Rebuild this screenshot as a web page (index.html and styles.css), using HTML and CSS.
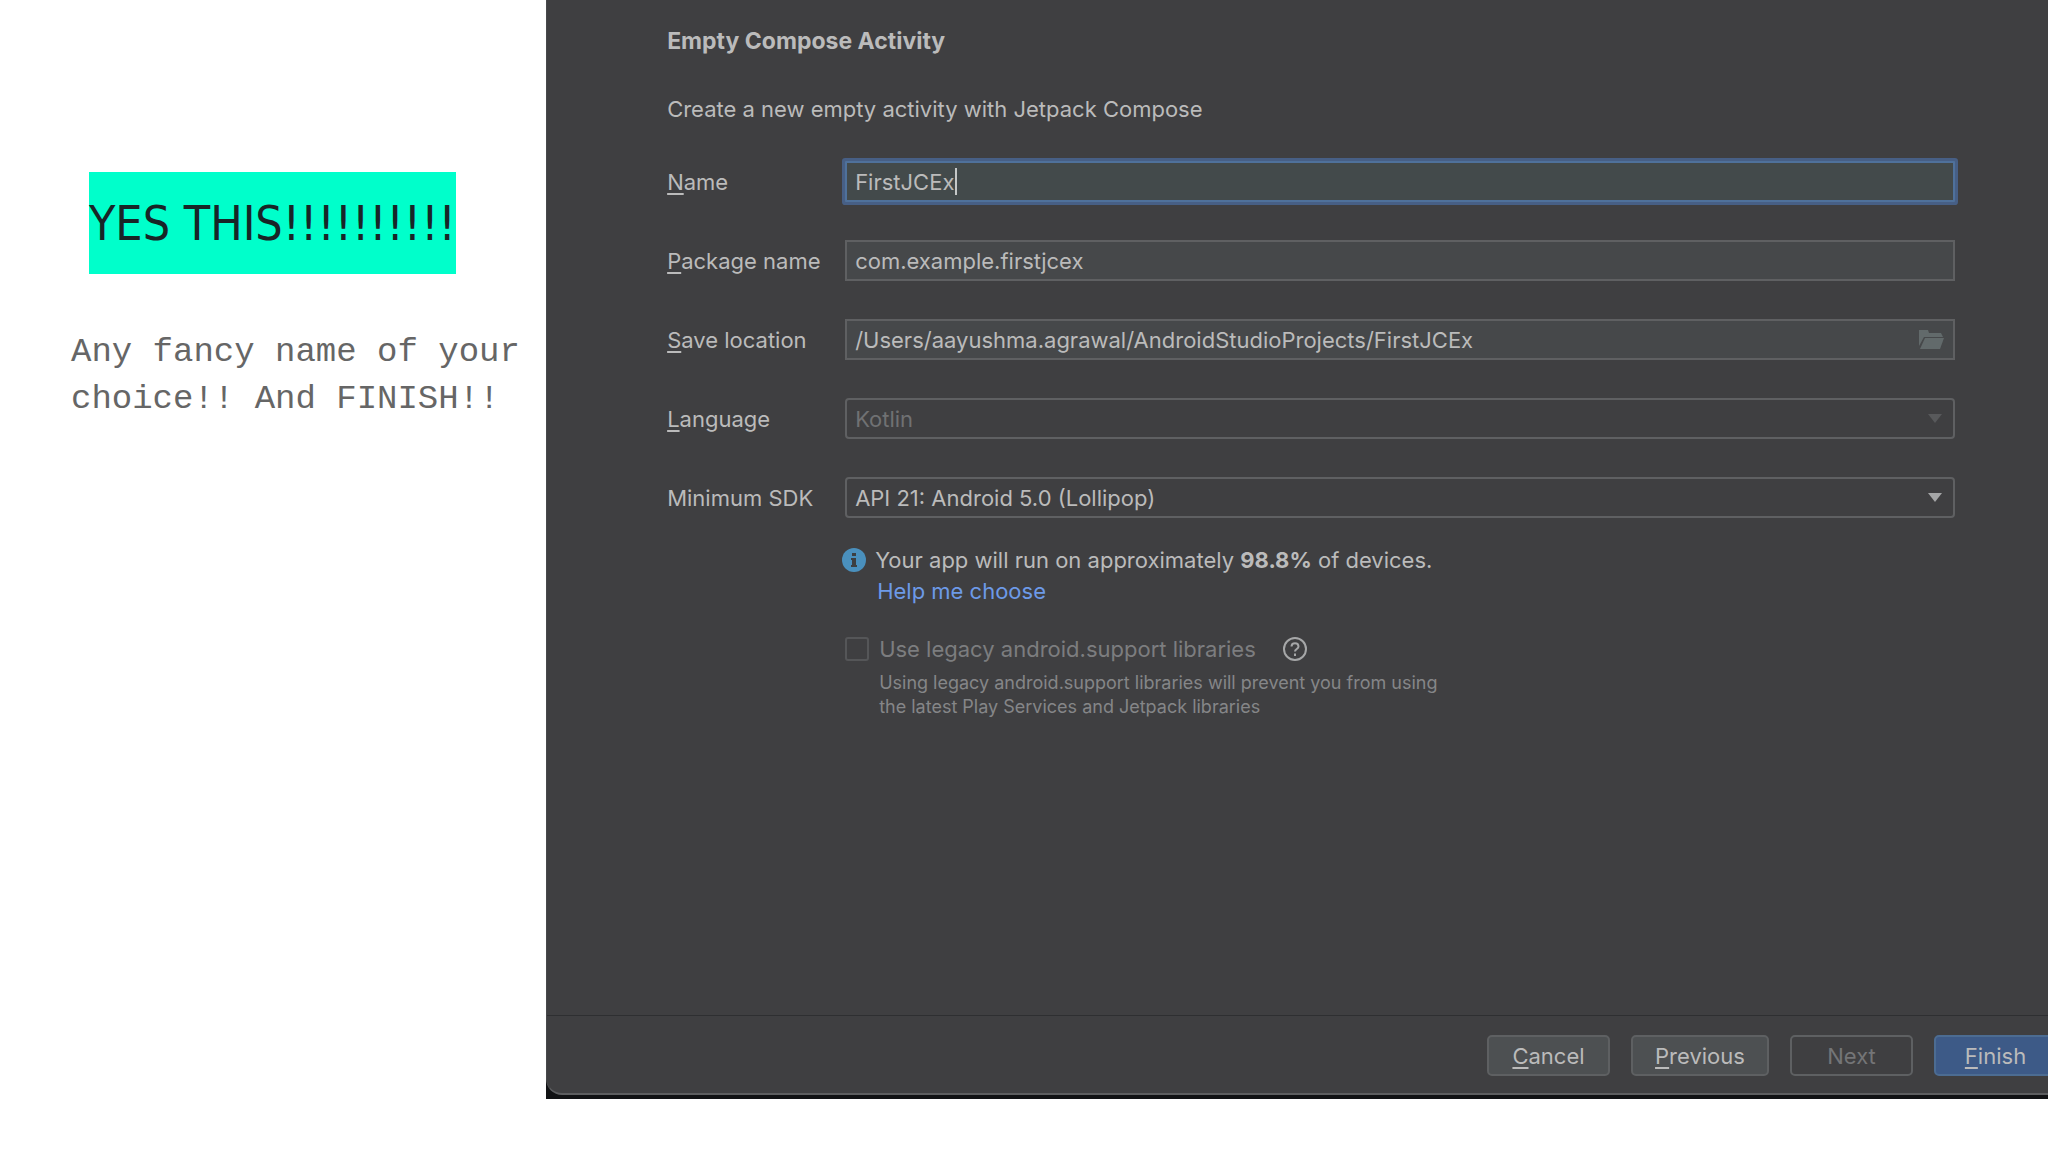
FILE: index.html
```html
<!DOCTYPE html>
<html lang="en">
<head>
<meta charset="utf-8">
<meta name="viewport" content="width=device-width, initial-scale=1">
<title>Empty Compose Activity</title>
<link rel="stylesheet" href="styles.css">
</head>
<body>
<div class="slide">
  <section class="notes">
    <h1 class="headline">YES THIS!!!!!!!!!!</h1>
    <p class="caption">Any fancy name of your choice!! And FINISH!!</p>
  </section>
  <main class="stage">
    <form class="wizard">
      <div class="content">
        <h2 class="title">Empty Compose Activity</h2>
        <p class="intro">Create a new empty activity with Jetpack Compose</p>
        <div class="fields">
          <label for="name"><u>N</u>ame</label>
          <div class="control">
            <input class="field focused" id="name" type="text" value="FirstJCEx">
            <span class="caret"></span>
          </div>
          <label for="package"><u>P</u>ackage name</label>
          <div class="control"><input class="field" id="package" type="text" value="com.example.firstjcex"></div>
          <label for="location"><u>S</u>ave location</label>
          <div class="control">
            <input class="field" id="location" type="text" value="/Users/aayushma.agrawal/AndroidStudioProjects/FirstJCEx">
            <button class="browse" type="button" aria-label="Browse">
              <svg width="26" height="20" viewBox="0 0 26 20"><path fill="#626a6b" d="M0 0h9l1 3h12l2 4H5L0 16z"/><path fill="#626a6b" d="M6 8h19l-4 11H1z"/></svg>
            </button>
          </div>
          <label for="language"><u>L</u>anguage</label>
          <div class="control">
            <select class="field combo" id="language" disabled><option>Kotlin</option></select>
            <svg class="arrow dim" width="14" height="9" viewBox="0 0 14 9"><path d="M0 0h14L7 9z"/></svg>
          </div>
          <label for="sdk">Minimum SDK</label>
          <div class="control">
            <select class="field combo" id="sdk"><option>API 21: Android 5.0 (Lollipop)</option></select>
            <svg class="arrow" width="14" height="9" viewBox="0 0 14 9"><path d="M0 0h14L7 9z"/></svg>
          </div>
        </div>
        <div class="details">
          <div class="info">
            <svg width="24" height="24" viewBox="0 0 24 24"><circle cx="12" cy="12" r="12" fill="#4a90bd"/><path fill="#3c3f41" d="M10 5h4v3h-4zM9 10h5v7h1v2H9v-2h1v-5H9z"/></svg>
            <p>Your app will run on approximately <b>98.8%</b> of devices.</p>
          </div>
          <a class="help" href="#choose">Help me choose</a>
          <div class="legacy">
            <input class="check" id="legacy" type="checkbox" disabled>
            <label for="legacy">Use legacy android.support libraries</label>
            <svg width="26" height="26" viewBox="0 0 26 26" fill="none" stroke="#a6a7a8" stroke-width="2"><circle cx="13" cy="13" r="11"/><path d="M9.500 10.500c0-4.500 7-4.500 7 0 0 2.500-3.500 2.500-3.500 5M13 17.500v2.500"/></svg>
          </div>
          <p class="hint">Using legacy android.support libraries will prevent you from using the latest Play Services and Jetpack libraries</p>
        </div>
      </div>
      <footer class="actions">
        <button class="btn" type="button"><u>C</u>ancel</button>
        <button class="btn wide" type="button"><u>P</u>revious</button>
        <button class="btn" type="button" disabled>Next</button>
        <button class="btn primary" type="submit"><u>F</u>inish</button>
      </footer>
    </form>
  </main>
</div>
</body>
</html>
```
FILE: styles.css
```css
* { box-sizing: border-box; }
body { margin: 0; background: #fff; }
h1, h2, p { margin: 0; }
input, select, button { font: inherit; color: inherit; margin: 0; }
u { text-underline-offset: 3px; text-decoration-thickness: 2px; text-decoration-skip-ink: none; }

.slide {
  display: grid;
  grid-template-columns: 4fr 11fr;
  min-height: 100vh;
  padding-bottom: 53px;
  overflow: hidden;
}

.notes { min-width: 0; padding: 172px 0 0 71px; }
.headline {
  width: fit-content;
  margin-left: 18px;
  background: #00ffcb;
  color: #182527;
  font: 400 48px/102px "DejaVu Sans Condensed", "Liberation Sans", sans-serif;
  white-space: nowrap;
}
.caption {
  margin-top: 55px;
  color: #666;
  font: 400 34px/47px "Liberation Mono", monospace;
}

.stage { min-width: 0; overflow: hidden; background: #111214; padding-bottom: 4px; }
.wizard {
  display: flex;
  flex-direction: column;
  height: 100%;
  background: #3f3f41;
  border-bottom: 2px solid #5d5e60;
  border-left: 1px solid #48494b;
  border-bottom-left-radius: 16px;
  color: #bbb;
  font: 400 22px/30px Inter, "Liberation Sans", sans-serif;
}
.content { flex: 1; padding: 26px 93px 40px 120px; }
.title { font-size: 23px; font-weight: 700; }
.intro { margin-top: 38px; }

.fields {
  display: grid;
  grid-template-columns: 178px 1fr;
  row-gap: 38px;
  align-items: center;
  margin-top: 37px;
}
.control { position: relative; }
.field {
  display: block;
  width: 100%;
  height: 41px;
  padding: 0 8px;
  border: 2px solid #5f6062;
  border-radius: 0;
  outline: 0;
  background: #46484a;
}
.focused { border-color: #4f719b; background: #434a4b; box-shadow: 0 0 0 3px #475f85; border-radius: 1px; }
.caret { position: absolute; left: 110px; top: 7px; width: 2px; height: 27px; background: #c5c8c8; }
.combo { appearance: none; border-radius: 4px; background: #3f3f41; opacity: 1; }
.combo:disabled { color: #707173; }
.browse { position: absolute; right: 10px; top: 11px; display: flex; padding: 0; border: 0; background: none; }
.arrow { position: absolute; right: 13px; top: 16px; fill: #a5a6a7; pointer-events: none; }
.dim { fill: #58595b; }

.details { padding-left: 178px; }
.info { display: flex; align-items: center; gap: 9px; margin: 27px 0 0 -3px; }
.help { display: block; width: fit-content; margin: 1px 0 0 32px; color: #6d9ae8; text-decoration: none; }
.legacy { display: flex; align-items: center; gap: 10px; margin-top: 28px; color: #7c7d7f; }
.legacy svg { margin-left: 16px; }
.check { appearance: none; width: 24px; height: 24px; border: 2px solid #555658; border-radius: 3px; }
.hint { max-width: 580px; margin: 7px 0 0 34px; color: #858688; font-size: 18px; line-height: 24px; }

.actions {
  display: flex;
  justify-content: flex-end;
  gap: 21px;
  margin-right: -9px;
  padding: 19px 0 17px;
  border-top: 1px solid #2e2f31;
}
.btn {
  min-width: 123px;
  height: 41px;
  padding: 0;
  border: 2px solid #5e6062;
  border-radius: 5px;
  background: #4d5052;
}
.wide { min-width: 138px; }
.btn:disabled { background: none; color: #747577; }
.primary { background: #3d5a87; border-color: #4c6c92; }
```
